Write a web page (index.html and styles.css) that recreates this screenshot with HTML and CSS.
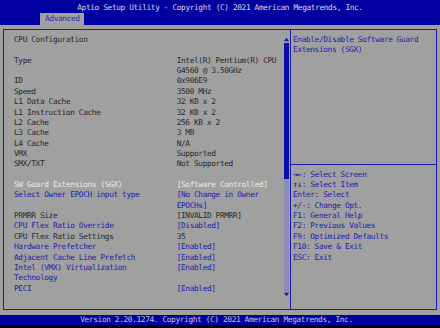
FILE: index.html
```html
<!DOCTYPE html>
<html>
<head>
<meta charset="utf-8">
<link rel="stylesheet" href="styles.css">
</head>
<body>
<div class="screen">
  <header class="top">
    <div class="title">Aptio Setup Utility - Copyright (C) 2021 American Megatrends, Inc.</div>
    <nav class="tabs"><span class="tab">Advanced</span></nav>
  </header>
  <div class="body">
    <div class="frame">
      <section class="main">
        <div class="rows">
          <span class="lbl">CPU Configuration</span><span></span>
          <span></span><span></span>
          <span class="lbl">Type</span><span class="val">Intel(R) Pentium(R) CPU</span>
          <span></span><span class="val">G4560 @ 3.50GHz</span>
          <span class="lbl">ID</span><span class="val">0x906E9</span>
          <span class="lbl">Speed</span><span class="val">3500 MHz</span>
          <span class="lbl">L1 Data Cache</span><span class="val">32 KB x 2</span>
          <span class="lbl">L1 Instruction Cache</span><span class="val">32 KB x 2</span>
          <span class="lbl">L2 Cache</span><span class="val">256 KB x 2</span>
          <span class="lbl">L3 Cache</span><span class="val">3 MB</span>
          <span class="lbl">L4 Cache</span><span class="val">N/A</span>
          <span class="lbl">VMX</span><span class="val">Supported</span>
          <span class="lbl">SMX/TXT</span><span class="val">Not Supported</span>
          <span></span><span></span>
          <span class="sel">SW Guard Extensions (SGX)</span><span class="sel">[Software Controlled]</span>
          <span class="opt">Select Owner EPOCH input type</span><span class="opt">[No Change in Owner</span>
          <span></span><span class="opt">EPOCHs]</span>
          <span class="lbl">PRMRR Size</span><span class="val">[INVALID PRMRR]</span>
          <span class="opt">CPU Flex Ratio Override</span><span class="opt">[Disabled]</span>
          <span class="lbl">CPU Flex Ratio Settings</span><span class="val">35</span>
          <span class="opt">Hardware Prefetcher</span><span class="opt">[Enabled]</span>
          <span class="opt">Adjacent Cache Line Prefetch</span><span class="opt">[Enabled]</span>
          <span class="opt">Intel (VMX) Virtualization</span><span class="opt">[Enabled]</span>
          <span class="opt">Technology</span><span></span>
          <span class="opt">PECI</span><span class="opt">[Enabled]</span>
        </div>
        <div class="scroll">
          <span class="arrow up"></span>
          <span class="thumb"></span>
          <span class="track"></span>
          <span class="arrow down"></span>
        </div>
      </section>
      <aside class="help">
        <div class="desc">
          <div>Enable/Disable Software Guard</div>
          <div>Extensions (SGX)</div>
        </div>
        <div class="sep"></div>
        <div class="keys">
          <div><b>→←</b>: Select Screen</div>
          <div><b>↑↓</b>: Select Item</div>
          <div>Enter: Select</div>
          <div>+/-: Change Opt.</div>
          <div>F1: General Help</div>
          <div>F2: Previous Values</div>
          <div>F9: Optimized Defaults</div>
          <div>F10: Save &amp; Exit</div>
          <div>ESC: Exit</div>
        </div>
      </aside>
    </div>
  </div>
  <footer class="foot">Version 2.20.1274. Copyright (C) 2021 American Megatrends, Inc.</footer>
</div>
</body>
</html>
```
FILE: styles.css
```css
* { box-sizing: border-box; }
html, body { margin: 0; padding: 0; background: #000; }
body {
  font-family: "DejaVu Sans Mono", "Liberation Mono", monospace;
  font-size: 7.8px;
  letter-spacing: -0.37px;
  line-height: 10.36px;
}
.screen { width: 440px; height: 328px; background: #000; display: flex; flex-direction: column; }
.top { background: #0000a0; height: 25px; display: flex; flex-direction: column; }
.title { color: #d8d8d8; text-align: center; height: 13px; padding-top: 3px; }
.tabs { padding-left: 40px; height: 12px; }
.tab { display: inline-block; background: #a0a0a0; color: #2a2aa8; height: 12px; padding: 1px 4px 0 5px; }
.body { background: #a0a0a0; height: 290px; padding: 4px 3px 5px 3px; }
.frame { height: 281px; border: 1px solid #1c1cb0; display: flex; }
.main { width: 287px; display: flex; padding: 5px 0 0 10px; border-right: 1px solid #1c1cb0; }
.rows { width: 270px; display: grid; grid-template-columns: 162.7px 1fr; grid-auto-rows: 10.36px; white-space: nowrap; }
.lbl, .val { color: #282828; }
.opt { color: #2020b0; }
.sel { color: #ececec; }
.scroll { width: 5px; display: flex; flex-direction: column; padding-top: 2px; height: 262px; }
.arrow { width: 5px; height: 5px; display: block; flex: none; background: #1010a8; }
.up { clip-path: polygon(50% 15%, 100% 85%, 0 85%); }
.down { clip-path: polygon(0 15%, 100% 15%, 50% 85%); }
.thumb { background: #0c0ca8; height: 136px; flex: none; margin-top: 1px; }
.track { background: #8c8cb8; flex: 1; }
.help { flex: 1; padding: 5px 0 0 2px; color: #2020b0; }
.desc { height: 124.3px; }
.sep { height: 10.36px; position: relative; }
.sep::after { content: ""; position: absolute; left: -2px; right: 0; top: 5px; border-top: 1px solid #1c1cb0; }
.keys b { font-weight: bold; }
.foot { background: #0000a0; color: #c8c8c8; height: 10px; line-height: 10px; text-align: center; padding-right: 7px; }
```
